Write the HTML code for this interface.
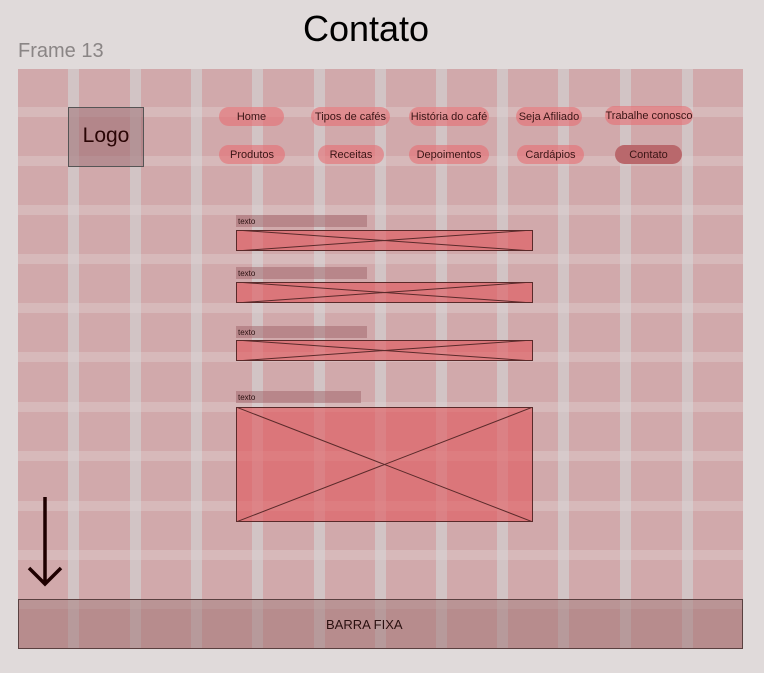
<!DOCTYPE html>
<html><head><meta charset="utf-8"><style>
*{margin:0;padding:0;box-sizing:border-box}
body{width:764px;height:673px;background:#e0dada;position:relative;overflow:hidden;font-family:"Liberation Sans",Roboto,sans-serif}
.a{position:absolute}
.vg{position:absolute;top:69px;height:579px;width:11px;background:rgba(210,205,205,0.75)}
.hg{position:absolute;left:18px;width:725px;height:10px;background:rgba(225,215,215,0.35)}
.btn{position:absolute;height:19px;border-radius:10px;background:rgba(230,110,115,0.6);font-size:11px;color:#3a1515;text-align:center;line-height:20px;white-space:nowrap}
.lbl{position:absolute;height:12px;background:rgba(160,100,105,0.5);font-size:8px;color:#2a1010;line-height:13px;padding-left:2px}
svg.x{position:absolute}
</style></head><body>
<div class="a" style="left:0;top:8px;width:732px;text-align:center;font-size:36px;color:#000">Contato</div>
<div class="a" style="left:18px;top:40px;font-size:20px;color:#8a8585">Frame 13</div>
<div class="a" style="left:18px;top:69px;width:725px;height:579px;background:#d1a9ab"></div>
<div class="vg" style="left:68px"></div><div class="vg" style="left:130px"></div><div class="vg" style="left:191px"></div><div class="vg" style="left:252px"></div><div class="vg" style="left:314px"></div><div class="vg" style="left:375px"></div><div class="vg" style="left:436px"></div><div class="vg" style="left:497px"></div><div class="vg" style="left:558px"></div><div class="vg" style="left:620px"></div><div class="vg" style="left:682px"></div>
<div class="hg" style="top:107px"></div><div class="hg" style="top:156px"></div><div class="hg" style="top:205px"></div><div class="hg" style="top:254px"></div><div class="hg" style="top:303px"></div><div class="hg" style="top:352px"></div><div class="hg" style="top:402px"></div><div class="hg" style="top:451px"></div><div class="hg" style="top:501px"></div><div class="hg" style="top:550px"></div><div class="hg" style="top:599px"></div>
<div class="a" style="left:68px;top:107px;width:76px;height:60px;background:rgba(150,100,105,0.5);border:1px solid #555;font-size:21px;color:#2a0505;text-align:center;line-height:56px">Logo</div>
<div class="btn" style="left:219px;top:107px;width:65px">Home</div>
<div class="btn" style="left:311px;top:107px;width:79px">Tipos de cafés</div>
<div class="btn" style="left:409px;top:107px;width:80px">História do café</div>
<div class="btn" style="left:516px;top:107px;width:66px">Seja Afiliado</div>
<div class="btn" style="left:605px;top:106px;width:88px">Trabalhe conosco</div>
<div class="btn" style="left:219px;top:145px;width:66px">Produtos</div>
<div class="btn" style="left:318px;top:145px;width:66px">Receitas</div>
<div class="btn" style="left:409px;top:145px;width:80px">Depoimentos</div>
<div class="btn" style="left:517px;top:145px;width:67px">Cardápios</div>
<div class="btn" style="left:615px;top:145px;width:67px;background:#b9686c">Contato</div>
<div class="lbl" style="left:236px;top:215px;width:131px">texto</div>
<svg class="x" style="left:236px;top:230px" width="297" height="21"><rect x=".5" y=".5" width="296" height="20" fill="rgba(225,85,90,0.6)" stroke="#5a2a2a"/><path d="M0 0L297 21M0 21L297 0" stroke="#5a2a2a" stroke-width="1"/></svg>
<div class="lbl" style="left:236px;top:267px;width:131px">texto</div>
<svg class="x" style="left:236px;top:282px" width="297" height="21"><rect x=".5" y=".5" width="296" height="20" fill="rgba(225,85,90,0.6)" stroke="#5a2a2a"/><path d="M0 0L297 21M0 21L297 0" stroke="#5a2a2a" stroke-width="1"/></svg>
<div class="lbl" style="left:236px;top:326px;width:131px">texto</div>
<svg class="x" style="left:236px;top:340px" width="297" height="21"><rect x=".5" y=".5" width="296" height="20" fill="rgba(225,85,90,0.6)" stroke="#5a2a2a"/><path d="M0 0L297 21M0 21L297 0" stroke="#5a2a2a" stroke-width="1"/></svg>
<div class="lbl" style="left:236px;top:391px;width:125px">texto</div>
<svg class="x" style="left:236px;top:407px" width="297" height="115"><rect x=".5" y=".5" width="296" height="114" fill="rgba(225,85,90,0.6)" stroke="#5a2a2a"/><path d="M0 0L297 115M0 115L297 0" stroke="#5a2a2a" stroke-width="1"/></svg>
<svg class="a" style="left:26px;top:496px" width="40" height="92"><path d="M19 1V88M3 72L19 88L35 72" stroke="#1e0000" stroke-width="3.5" fill="none"/></svg>
<div class="a" style="left:18px;top:599px;width:725px;height:50px;background:rgba(150,105,105,0.45);border:1px solid #5a4040;font-size:13px;color:#2a1010;line-height:50px"><span style="position:absolute;left:307px">BARRA FIXA</span></div>
</body></html>
